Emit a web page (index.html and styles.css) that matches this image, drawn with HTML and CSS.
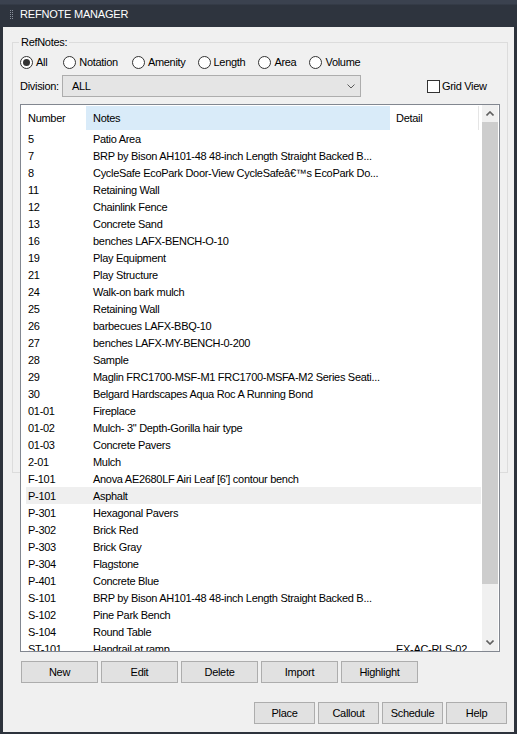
FILE: index.html
```html
<!DOCTYPE html>
<html>
<head>
<meta charset="utf-8">
<link rel="stylesheet" href="styles.css">
</head>
<body>
<div class="window">
  <div class="titlebar">
    <svg class="grip" width="3" height="9" viewBox="0 0 3 9"><g fill="#8b929c"><rect x="0" y="0" width="1" height="1"/><rect x="2" y="0" width="1" height="1"/><rect x="0" y="2" width="1" height="1"/><rect x="2" y="2" width="1" height="1"/><rect x="0" y="4" width="1" height="1"/><rect x="2" y="4" width="1" height="1"/><rect x="0" y="6" width="1" height="1"/><rect x="2" y="6" width="1" height="1"/><rect x="0" y="8" width="1" height="1"/><rect x="2" y="8" width="1" height="1"/></g></svg>
    <span class="title">REFNOTE MANAGER</span>
  </div>
  <div class="frame">
    <div class="panel">
      <div class="group">
        <div class="legend">RefNotes:</div>
        <div class="radios">
          <label class="radio r-all"><span class="circle checked"></span>All</label>
          <label class="radio r-notation"><span class="circle"></span>Notation</label>
          <label class="radio r-amenity"><span class="circle"></span>Amenity</label>
          <label class="radio r-length"><span class="circle"></span>Length</label>
          <label class="radio r-area"><span class="circle"></span>Area</label>
          <label class="radio r-volume"><span class="circle"></span>Volume</label>
        </div>
        <div class="division">
          <span class="div-label">Division:</span>
          <div class="combo">
            <span>ALL</span>
            <svg class="chev" width="8" height="5" viewBox="0 0 8 5"><path d="M0.5 0.5 L4 4 L7.5 0.5" fill="none" stroke="#5a5a5a" stroke-width="1"/></svg>
          </div>
          <label class="check"><span class="box"></span>Grid View</label>
        </div>
        <div class="list">
          <div class="list-main">
            <div class="header">
              <div class="h-num">Number</div>
              <div class="h-notes">Notes</div>
              <div class="h-detail">Detail</div>
              <div class="h-sep"></div>
            </div>
            <div class="rows">
              <div class="row"><span class="c-num">5</span><span class="c-notes">Patio Area</span><span class="c-detail"></span></div>
              <div class="row"><span class="c-num">7</span><span class="c-notes">BRP by Bison AH101-48 48-inch Length Straight Backed B...</span><span class="c-detail"></span></div>
              <div class="row"><span class="c-num">8</span><span class="c-notes">CycleSafe EcoPark Door-View CycleSafeâ€™s EcoPark Do...</span><span class="c-detail"></span></div>
              <div class="row"><span class="c-num">11</span><span class="c-notes">Retaining Wall</span><span class="c-detail"></span></div>
              <div class="row"><span class="c-num">12</span><span class="c-notes">Chainlink Fence</span><span class="c-detail"></span></div>
              <div class="row"><span class="c-num">13</span><span class="c-notes">Concrete Sand</span><span class="c-detail"></span></div>
              <div class="row"><span class="c-num">16</span><span class="c-notes">benches LAFX-BENCH-O-10</span><span class="c-detail"></span></div>
              <div class="row"><span class="c-num">19</span><span class="c-notes">Play Equipment</span><span class="c-detail"></span></div>
              <div class="row"><span class="c-num">21</span><span class="c-notes">Play Structure</span><span class="c-detail"></span></div>
              <div class="row"><span class="c-num">24</span><span class="c-notes">Walk-on bark mulch</span><span class="c-detail"></span></div>
              <div class="row"><span class="c-num">25</span><span class="c-notes">Retaining Wall</span><span class="c-detail"></span></div>
              <div class="row"><span class="c-num">26</span><span class="c-notes">barbecues LAFX-BBQ-10</span><span class="c-detail"></span></div>
              <div class="row"><span class="c-num">27</span><span class="c-notes">benches LAFX-MY-BENCH-0-200</span><span class="c-detail"></span></div>
              <div class="row"><span class="c-num">28</span><span class="c-notes">Sample</span><span class="c-detail"></span></div>
              <div class="row"><span class="c-num">29</span><span class="c-notes">Maglin FRC1700-MSF-M1 FRC1700-MSFA-M2 Series Seati...</span><span class="c-detail"></span></div>
              <div class="row"><span class="c-num">30</span><span class="c-notes">Belgard Hardscapes Aqua Roc A Running Bond</span><span class="c-detail"></span></div>
              <div class="row"><span class="c-num">01-01</span><span class="c-notes">Fireplace</span><span class="c-detail"></span></div>
              <div class="row"><span class="c-num">01-02</span><span class="c-notes">Mulch- 3" Depth-Gorilla hair type</span><span class="c-detail"></span></div>
              <div class="row"><span class="c-num">01-03</span><span class="c-notes">Concrete Pavers</span><span class="c-detail"></span></div>
              <div class="row"><span class="c-num">2-01</span><span class="c-notes">Mulch</span><span class="c-detail"></span></div>
              <div class="row"><span class="c-num">F-101</span><span class="c-notes">Anova AE2680LF Airi Leaf [6'] contour bench</span><span class="c-detail"></span></div>
              <div class="row selected"><span class="c-num">P-101</span><span class="c-notes">Asphalt</span><span class="c-detail"></span></div>
              <div class="row"><span class="c-num">P-301</span><span class="c-notes">Hexagonal Pavers</span><span class="c-detail"></span></div>
              <div class="row"><span class="c-num">P-302</span><span class="c-notes">Brick Red</span><span class="c-detail"></span></div>
              <div class="row"><span class="c-num">P-303</span><span class="c-notes">Brick Gray</span><span class="c-detail"></span></div>
              <div class="row"><span class="c-num">P-304</span><span class="c-notes">Flagstone</span><span class="c-detail"></span></div>
              <div class="row"><span class="c-num">P-401</span><span class="c-notes">Concrete Blue</span><span class="c-detail"></span></div>
              <div class="row"><span class="c-num">S-101</span><span class="c-notes">BRP by Bison AH101-48 48-inch Length Straight Backed B...</span><span class="c-detail"></span></div>
              <div class="row"><span class="c-num">S-102</span><span class="c-notes">Pine Park Bench</span><span class="c-detail"></span></div>
              <div class="row"><span class="c-num">S-104</span><span class="c-notes">Round Table</span><span class="c-detail"></span></div>
              <div class="row"><span class="c-num">ST-101</span><span class="c-notes">Handrail at ramp</span><span class="c-detail">EX-AC-RLS-02</span></div>
            </div>
          </div>
          <div class="scrollbar">
            <div class="sb-btn"><svg width="8" height="5" viewBox="0 0 8 5"><path d="M0.5 4.5 L4 1 L7.5 4.5" fill="none" stroke="#606060" stroke-width="1.6"/></svg></div>
            <div class="sb-thumb"></div>
            <div class="sb-track"></div>
            <div class="sb-btn"><svg width="8" height="5" viewBox="0 0 8 5"><path d="M0.5 0.5 L4 4 L7.5 0.5" fill="none" stroke="#606060" stroke-width="1.6"/></svg></div>
          </div>
          <div class="sb-gap"></div>
        </div>
      </div>
      <div class="actions">
        <button class="btn wide">New</button>
        <button class="btn wide">Edit</button>
        <button class="btn wide">Delete</button>
        <button class="btn wide">Import</button>
        <button class="btn wide">Highlight</button>
      </div>
      <div class="footer">
        <button class="btn narrow">Place</button>
        <button class="btn narrow">Callout</button>
        <button class="btn narrow">Schedule</button>
        <button class="btn narrow">Help</button>
      </div>
    </div>
  </div>
</div>
</body>
</html>
```

FILE: styles.css
```css
html, body {
  margin: 0;
  padding: 0;
}
body {
  background: #2d333c;
  font-family: "Liberation Sans", Arial, sans-serif;
  font-size: 11px;
  letter-spacing: -0.3px;
  color: #000;
}
.window {
  width: 517px;
  height: 734px;
  display: flex;
  flex-direction: column;
  background: #2d333c;
}
.titlebar {
  height: 27px;
  box-sizing: border-box;
  display: flex;
  align-items: center;
  padding-left: 10px;
  background: linear-gradient(#3b424f 0, #3b424f 4px, #2e343e 5px, #2e343e 100%);
}
.grip {
  display: block;
  margin-top: 1px;
}
.title {
  margin-left: 7px;
  color: #ffffff;
  font-size: 11px;
  letter-spacing: -0.2px;
}
.frame {
  flex: 1;
  display: flex;
  padding: 0 3px 2px 3px;
}
.panel {
  flex: 1;
  min-width: 0;
  background: #f0f0f0;
  padding: 15px 6px 0 9px;
}
.group {
  position: relative;
  height: 431px;
  box-sizing: border-box;
  border: 1px solid #dcdcdc;
  padding: 11px 7px 0 7px;
}
.legend {
  position: absolute;
  top: -7px;
  left: 6px;
  padding: 0 2px;
  line-height: 13px;
  background: #f0f0f0;
}
.radios {
  display: flex;
  align-items: center;
  height: 16px;
}
.radio {
  display: flex;
  align-items: center;
  gap: 3px;
}
.r-notation { margin-left: 16px; }
.r-amenity { margin-left: 14px; }
.r-length { margin-left: 12px; }
.r-area { margin-left: 13px; }
.r-volume { margin-left: 13px; }
.circle {
  width: 13px;
  height: 13px;
  box-sizing: border-box;
  border: 1px solid #333;
  border-radius: 50%;
  background: #fff;
  display: flex;
  align-items: center;
  justify-content: center;
}
.circle.checked::after {
  content: "";
  width: 7px;
  height: 7px;
  border-radius: 50%;
  background: #333;
}
.division {
  margin-top: 5px;
  height: 22px;
  display: flex;
  align-items: center;
}
.combo {
  margin-left: 3px;
  width: 299px;
  height: 22px;
  box-sizing: border-box;
  border: 1px solid #adadad;
  background: #e5e5e5;
  display: flex;
  align-items: center;
  justify-content: space-between;
  padding: 0 5px 0 9px;
}
.chev {
  display: block;
}
.check {
  margin-left: 66px;
  display: flex;
  align-items: center;
  gap: 2px;
}
.box {
  width: 13px;
  height: 13px;
  box-sizing: border-box;
  border: 1px solid #333;
  background: #fff;
}
.list {
  margin-top: 7px;
  height: 548px;
  box-sizing: border-box;
  border: 1px solid #828790;
  background: #fff;
  display: flex;
  position: relative;
}
.list-main {
  width: 461px;
  overflow: hidden;
}
.header {
  margin-top: 1px;
  height: 24px;
  display: flex;
  align-items: stretch;
}
.header > div {
  display: flex;
  align-items: center;
  box-sizing: border-box;
}
.h-num {
  width: 65px;
  padding-left: 7px;
}
.h-notes {
  width: 304px;
  padding-left: 7px;
  background: #d9ebf9;
}
.h-detail {
  width: 88px;
  padding-left: 6px;
}
.h-sep {
  width: 1px;
  background: #e5e5e5;
}
.rows {
  height: 521px;
  overflow: hidden;
}
.row {
  height: 17px;
  margin: 0 1px 0 5px;
  display: flex;
  align-items: center;
  white-space: nowrap;
}
.row.selected {
  background: #efefef;
}
.c-num {
  width: 60px;
  padding-left: 2px;
  box-sizing: border-box;
  flex: none;
}
.c-notes {
  width: 304px;
  padding-left: 7px;
  box-sizing: border-box;
  overflow: hidden;
  flex: none;
}
.c-detail {
  padding-left: 6px;
  overflow: hidden;
}
.scrollbar {
  width: 16px;
  flex: none;
  background: #f0f0f0;
  display: flex;
  flex-direction: column;
}
.sb-gap {
  width: 1px;
  flex: none;
}
.sb-btn {
  height: 17px;
  display: flex;
  align-items: center;
  justify-content: center;
  flex: none;
}
.sb-btn svg {
  display: block;
}
.sb-thumb {
  height: 462px;
  background: #cdcdcd;
  flex: none;
}
.sb-track {
  flex: 1;
}
.btn {
  height: 22px;
  box-sizing: border-box;
  border: 1px solid #adadad;
  background: #e1e1e1;
  font-family: "Liberation Sans", Arial, sans-serif;
  font-size: 11px;
  letter-spacing: -0.3px;
  color: #000;
  padding: 0;
  margin: 0;
}
.actions {
  margin-top: 188px;
  padding-left: 9px;
  display: flex;
  gap: 3px;
}
.btn.wide {
  width: 77px;
}
.footer {
  margin-top: 19px;
  margin-right: 1px;
  display: flex;
  justify-content: flex-end;
  gap: 3px;
}
.btn.narrow {
  width: 61px;
}
```
